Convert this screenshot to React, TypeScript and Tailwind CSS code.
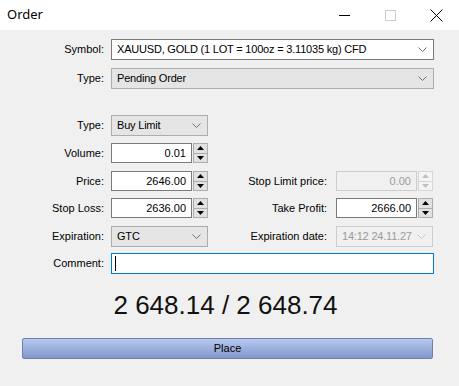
const font = { fontFamily: '"Liberation Sans", Arial, sans-serif' };

const Chevron = ({ disabled = false }: { disabled?: boolean }) => (
  <svg width="9" height="5" viewBox="0 0 9 5" className="shrink-0">
    <path d="M0.5 0.5 L4.5 4.5 L8.5 0.5" fill="none" stroke={disabled ? '#c4c4c4' : '#707070'} strokeWidth="1" />
  </svg>
);

const Combo = ({ value, width, editable = false, disabled = false }: { value: string; width: string; editable?: boolean; disabled?: boolean }) => (
  <div
    className={`${width} h-[21px] flex items-center justify-between pl-[5px] pr-[6px] border ${
      editable ? 'bg-white border-[#7a7a7a]' : disabled ? 'bg-[#f0f0f0] border-[#cccccc]' : 'bg-[#e5e5e5] border-[#adadad]'
    }`}
  >
    <span className={`text-[11px] whitespace-nowrap tracking-[-0.2px] ${disabled ? 'text-[#9a9a9a]' : 'text-black'}`}>{value}</span>
    <Chevron disabled={disabled} />
  </div>
);

const Spin = ({ disabled = false }: { disabled?: boolean }) => {
  const c = disabled ? '#c0c0c0' : '#000';
  const b = disabled ? 'border-[#d6d6d6] bg-[#f4f4f4]' : 'border-[#adadad] bg-[#e1e1e1]';
  return (
    <div className="flex flex-col w-[15px] h-[20px] ml-[1px]">
      <div className={`flex-1 flex items-center justify-center border ${b}`}>
        <svg width="7" height="4" viewBox="0 0 7 4"><path d="M0 4 L3.5 0 L7 4 Z" fill={c} /></svg>
      </div>
      <div className={`flex-1 flex items-center justify-center border border-t-0 ${b}`}>
        <svg width="7" height="4" viewBox="0 0 7 4"><path d="M0 0 L3.5 4 L7 0 Z" fill={c} /></svg>
      </div>
    </div>
  );
};

const NumField = ({ value, disabled = false }: { value: string; disabled?: boolean }) => (
  <div className="flex items-center">
    <div
      className={`w-[81px] h-[20px] flex items-center justify-end pr-[5px] border text-[11px] ${
        disabled ? 'bg-[#f0f0f0] border-[#cccccc] text-[#9a9a9a]' : 'bg-white border-[#7a7a7a] text-black'
      }`}
    >
      {value}
    </div>
    <Spin disabled={disabled} />
  </div>
);

const Label = ({ text, w = 'w-[104px]' }: { text: string; w?: string }) => (
  <div className={`${w} shrink-0 text-right text-[11px] whitespace-nowrap text-black`}>{text}</div>
);

export default function App() {
  return (
    <div className="w-[459px] h-[386px] bg-[#f0f0f0] flex flex-col overflow-hidden" style={font}>
      {/* Title bar */}
      <div className="h-[30px] bg-white flex items-center justify-between shrink-0">
        <span className="pl-[7px] text-[13px] text-black" style={{ fontFamily: '"Noto Sans", "Liberation Sans", sans-serif' }}>
          Order
        </span>
        <div className="flex items-center h-full">
          <div className="w-[46px] h-full flex items-center justify-center">
            <svg width="11" height="1" viewBox="0 0 11 1"><rect width="11" height="1" fill="#000" /></svg>
          </div>
          <div className="w-[46px] h-full flex items-center justify-center">
            <svg width="11" height="11" viewBox="0 0 11 11"><rect x="0.5" y="0.5" width="10" height="10" fill="none" stroke="#cccccc" /></svg>
          </div>
          <div className="w-[46px] h-full flex items-center justify-center">
            <svg width="13" height="13" viewBox="0 0 13 13"><path d="M0.5 0.5 L12.5 12.5 M12.5 0.5 L0.5 12.5" stroke="#000" strokeWidth="1" /></svg>
          </div>
        </div>
      </div>

      {/* Body */}
      <div className="flex flex-col pt-[9px]">
        <div className="flex items-center gap-[7px]">
          <Label text="Symbol:" />
          <Combo value="XAUUSD, GOLD (1 LOT = 100oz = 3.11035 kg) CFD" width="w-[323px]" editable />
        </div>
        <div className="flex items-center gap-[7px] mt-[8px]">
          <Label text="Type:" />
          <Combo value="Pending Order" width="w-[323px]" />
        </div>

        <div className="flex items-center gap-[7px] mt-[26px]">
          <Label text="Type:" />
          <Combo value="Buy Limit" width="w-[97px]" />
        </div>

        <div className="flex items-center mt-[7px]">
          <div className="flex items-center gap-[7px]">
            <Label text="Volume:" />
            <NumField value="0.01" />
          </div>
        </div>

        <div className="flex items-center mt-[8px]">
          <div className="flex items-center gap-[7px]">
            <Label text="Price:" />
            <NumField value="2646.00" />
          </div>
          <div className="flex items-center gap-[9px]">
            <Label text="Stop Limit price:" w="w-[119px]" />
            <NumField value="0.00" disabled />
          </div>
        </div>

        <div className="flex items-center mt-[7px]">
          <div className="flex items-center gap-[7px]">
            <Label text="Stop Loss:" />
            <NumField value="2636.00" />
          </div>
          <div className="flex items-center gap-[9px]">
            <Label text="Take Profit:" w="w-[119px]" />
            <NumField value="2666.00" />
          </div>
        </div>

        <div className="flex items-center mt-[8px]">
          <div className="flex items-center gap-[7px]">
            <Label text="Expiration:" />
            <Combo value="GTC" width="w-[97px]" />
          </div>
          <div className="flex items-center gap-[9px]">
            <Label text="Expiration date:" w="w-[119px]" />
            <Combo value="14:12 24.11.27" width="w-[97px]" disabled />
          </div>
        </div>

        <div className="flex items-center gap-[7px] mt-[6px]">
          <Label text="Comment:" />
          <div className="w-[323px] h-[21px] bg-white border border-[#0078d7] flex items-center pl-[3px]">
            <div className="w-[1px] h-[15px] bg-black" />
          </div>
        </div>

        <div className="flex justify-center mt-[14px] pr-[8px]">
          <span className="text-[26px] leading-[34px] text-[#111]">2 648.14 / 2 648.74</span>
        </div>

        <div className="mt-[16px] ml-[22px] w-[411px] h-[21px] rounded-[2px] border border-[#7081ad] bg-gradient-to-b from-[#b8c9f0] to-[#8198cb] flex items-center justify-center">
          <span className="text-[11px] text-black">Place</span>
        </div>
      </div>
    </div>
  );
}
